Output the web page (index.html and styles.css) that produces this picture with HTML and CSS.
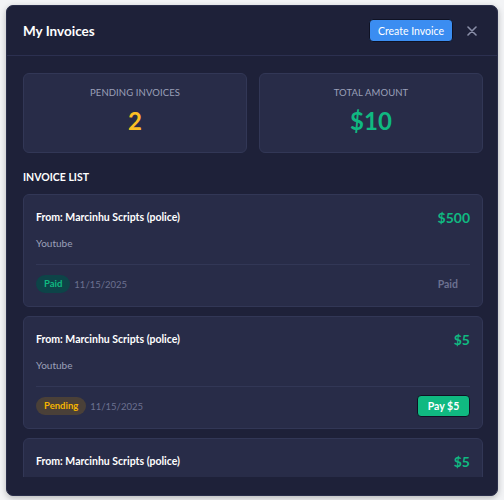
FILE: index.html
```html
<!DOCTYPE html>
<html lang="en">
<head>
<meta charset="utf-8">
<title>My Invoices</title>
<link rel="stylesheet" href="styles.css">
</head>
<body>
<div class="modal">
  <header class="modal-header">
    <h1 class="title">My Invoices</h1>
    <div class="header-actions">
      <button class="btn-create">Create Invoice</button>
      <button class="btn-close" aria-label="Close">
        <svg width="10" height="10" viewBox="0 0 10 10"><path d="M1 1L9 9M9 1L1 9" stroke="currentColor" stroke-width="1.6" stroke-linecap="round"/></svg>
      </button>
    </div>
  </header>
  <div class="modal-body">
    <div class="stats">
      <div class="stat-card">
        <div class="stat-label">PENDING INVOICES</div>
        <div class="stat-value yellow">2</div>
      </div>
      <div class="stat-card">
        <div class="stat-label">TOTAL AMOUNT</div>
        <div class="stat-value green">$10</div>
      </div>
    </div>
    <h2 class="section-title">INVOICE LIST</h2>
    <div class="list">
      <div class="invoice">
        <div class="inv-top">
          <span class="inv-from">From: Marcinhu Scripts (police)</span>
          <span class="inv-amount">$500</span>
        </div>
        <div class="inv-desc">Youtube</div>
        <div class="inv-footer">
          <div class="inv-meta">
            <span class="badge badge-paid">Paid</span>
            <span class="inv-date">11/15/2025</span>
          </div>
          <span class="paid-text">Paid</span>
        </div>
      </div>
      <div class="invoice">
        <div class="inv-top">
          <span class="inv-from">From: Marcinhu Scripts (police)</span>
          <span class="inv-amount">$5</span>
        </div>
        <div class="inv-desc">Youtube</div>
        <div class="inv-footer">
          <div class="inv-meta">
            <span class="badge badge-pending">Pending</span>
            <span class="inv-date">11/15/2025</span>
          </div>
          <button class="btn-pay">Pay $5</button>
        </div>
      </div>
      <div class="invoice">
        <div class="inv-top">
          <span class="inv-from">From: Marcinhu Scripts (police)</span>
          <span class="inv-amount">$5</span>
        </div>
      </div>
    </div>
  </div>
</div>
</body>
</html>
```

FILE: styles.css
```css
* { box-sizing: border-box; }
html, body { margin: 0; padding: 0; }
body {
  background: #f3f4f6;
  font-family: Lato, "Noto Sans", sans-serif;
  padding: 5px 6px;
}
.modal {
  width: 492px;
  height: 491px;
  background: #1e2139;
  border: 1px solid #2a2e4a;
  border-radius: 7px;
  display: flex;
  flex-direction: column;
  overflow: hidden;
  box-shadow: 0 2px 6px rgba(0,0,0,0.25);
}
.modal-header {
  height: 50px;
  flex: none;
  display: flex;
  align-items: center;
  justify-content: space-between;
  padding: 0 20px 0 16px;
  border-bottom: 1px solid #2c3050;
}
.title {
  margin: 0;
  font-size: 13.5px;
  font-weight: 700;
  color: #ffffff;
}
.header-actions { display: flex; align-items: center; gap: 14px; }
.btn-create {
  font-family: inherit;
  background: #3b8df1;
  color: #fff;
  border: 1px solid #0f1224;
  border-radius: 4px;
  font-size: 10.5px;
  height: 23px;
  width: 84px;
  padding: 0;
}
.btn-close {
  background: none;
  border: 0;
  padding: 0;
  color: #8a8fa8;
  display: flex;
}
.modal-body {
  flex: 1;
  min-height: 0;
  display: flex;
  flex-direction: column;
  padding: 17px 14px 18px 16px;
}
.stats {
  display: grid;
  grid-template-columns: 1fr 1fr;
  gap: 12px;
  flex: none;
}
.stat-card {
  background: #282c48;
  border: 1px solid #323756;
  border-radius: 6px;
  height: 80px;
  display: flex;
  flex-direction: column;
  align-items: center;
  padding-top: 13px;
}
.stat-label {
  font-size: 9.5px;
  color: #9ba0b9;
  letter-spacing: 0.1px;
}
.stat-value {
  font-size: 24px;
  font-weight: 700;
  margin-top: 8px;
  line-height: 30px;
}
.yellow { color: #fbbf24; }
.green { color: #10b981; }
.section-title {
  margin: 18px 0 11px;
  font-size: 10.5px;
  font-weight: 700;
  color: #ffffff;
  flex: none;
}
.list {
  flex: 1;
  min-height: 0;
  overflow: hidden;
  display: flex;
  flex-direction: column;
  gap: 9px;
}
.invoice {
  flex: none;
  background: #282c48;
  border: 1px solid #323756;
  border-radius: 6px;
  padding: 12px 12px 11px 12px;
}
.invoice:last-child { height: 60px; }
.inv-top {
  display: flex;
  justify-content: space-between;
  align-items: center;
  height: 20px;
}
.inv-from {
  font-size: 10.5px;
  font-weight: 700;
  color: #ffffff;
}
.inv-amount {
  font-size: 14px;
  font-weight: 700;
  color: #10b981;
}
.inv-desc {
  margin-top: 9px;
  font-size: 10px;
  color: #9ba0b9;
  line-height: 14px;
}
.inv-footer {
  margin-top: 14px;
  border-top: 1px solid #323756;
  padding-top: 8px;
  height: 31px;
  display: flex;
  justify-content: space-between;
  align-items: center;
}
.inv-meta { display: flex; align-items: center; gap: 4px; }
.badge {
  font-size: 9.5px;
  font-weight: 700;
  border-radius: 9px;
  height: 18px;
  line-height: 18px;
  padding: 0 8px;
}
.badge-paid { background: #0d4448; color: #10b981; }
.badge-pending { background: #4a4038; color: #f5b400; }
.inv-date { font-size: 9.5px; color: #6c7190; }
.paid-text {
  font-size: 10.5px;
  font-weight: 700;
  color: #6c7190;
  margin-right: 12px;
}
.btn-pay {
  font-family: inherit;
  background: #10b981;
  color: #fff;
  border: 1px solid #0f1224;
  border-radius: 4px;
  font-size: 10.5px;
  font-weight: 700;
  height: 22px;
  width: 53px;
  padding: 0;
}
```
